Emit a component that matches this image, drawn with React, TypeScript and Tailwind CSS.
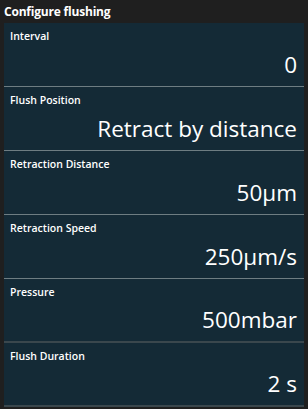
const rows = [
  { label: 'Interval', value: '0', line: 'light' },
  { label: 'Flush Position', value: 'Retract by distance', line: 'light' },
  { label: 'Retraction Distance', value: '50µm', line: 'light' },
  { label: 'Retraction Speed', value: '250µm/s', line: 'light' },
  { label: 'Pressure', value: '500mbar', line: 'dark' },
  { label: 'Flush Duration', value: '2 s', line: 'dark' },
];

export default function App() {
  return (
    <div
      className="w-[308px] h-[409px] bg-[#1f1f1f] text-white overflow-hidden px-[4px]"
      style={{ fontFamily: '"Open Sans", "Noto Sans", sans-serif' }}
    >
      <div className="h-[23px] flex items-center text-[12px] font-bold leading-none tracking-[-0.2px]">
        Configure flushing
      </div>
      <div className="bg-[#142a36]">
        {rows.map((r) => (
          <div
            key={r.label}
            className={
              r.line === 'light'
                ? 'h-[64px] flex flex-col border-b border-[#6e7d82] px-[6px]'
                : 'h-[64px] flex flex-col border-b-2 border-[#3a474d] px-[6px]'
            }
          >
            <div className="text-[10.5px] font-semibold leading-[14px] pt-[6px]">{r.label}</div>
            <div className="mt-auto mb-[6px] text-right text-[22.5px] leading-[30px] pr-[1px]">{r.value}</div>
          </div>
        ))}
      </div>
    </div>
  );
}
